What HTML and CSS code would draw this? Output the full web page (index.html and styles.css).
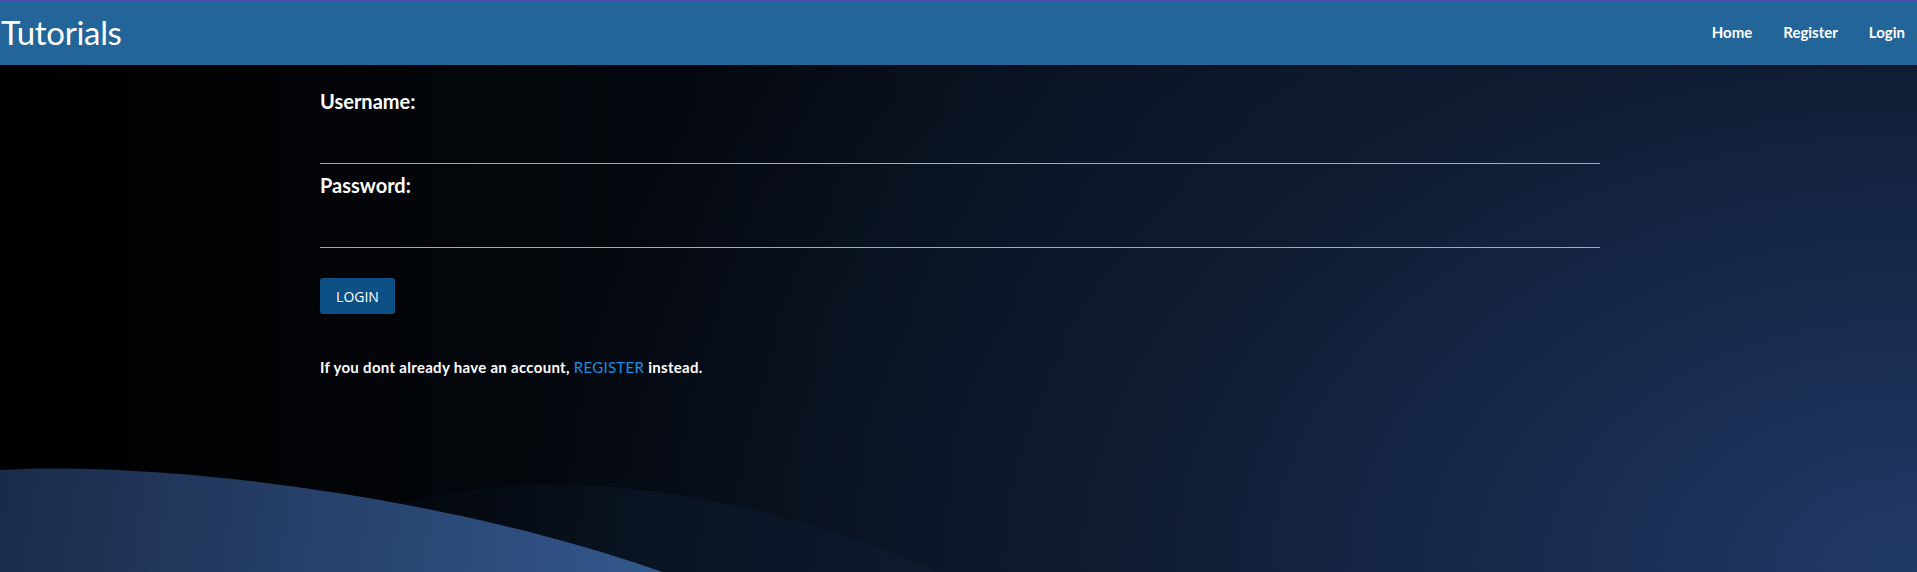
FILE: index.html
```html
<!DOCTYPE html>
<html lang="en">
<head>
<meta charset="utf-8">
<title>Tutorials - Login</title>
<link rel="stylesheet" href="styles.css">
</head>
<body>
<header class="topbar">
  <a class="brand" href="#">Tutorials</a>
  <nav class="nav">
    <a href="#">Home</a>
    <a href="#">Register</a>
    <a href="#">Login</a>
  </nav>
</header>
<main class="main">
  <svg class="waves" viewBox="0 0 1917 507" preserveAspectRatio="none" aria-hidden="true">
    <defs>
      <linearGradient id="w1" x1="0" y1="400" x2="700" y2="507" gradientUnits="userSpaceOnUse">
        <stop offset="0" stop-color="#1a2b49"/>
        <stop offset="1" stop-color="#355a91"/>
      </linearGradient>
      <linearGradient id="w2" x1="450" y1="420" x2="990" y2="507" gradientUnits="userSpaceOnUse">
        <stop offset="0" stop-color="#04080f"/>
        <stop offset="0.35" stop-color="#091321"/>
        <stop offset="1" stop-color="#0e1c32"/>
      </linearGradient>
    </defs>
    <path d="M380,445 C500,405 710,398 990,530 L380,530 Z" fill="url(#w2)"/>
    <path d="M0,405 C150,395 510,430 775,552 L0,552 Z" fill="url(#w1)"/>
  </svg>
  <form class="form">
    <label class="label" for="u">Username:</label>
    <input class="field" id="u" type="text">
    <label class="label" for="p">Password:</label>
    <input class="field" id="p" type="password">
    <button class="btn" type="button">LOGIN</button>
    <p class="note">If you dont already have an account, <a href="#">REGISTER</a> instead.</p>
  </form>
</main>
</body>
</html>
```
FILE: styles.css
```css
html, body {
  margin: 0;
  padding: 0;
  height: 100%;
}
body {
  font-family: "Lato", "Noto Sans", sans-serif;
  color: #fff;
  background: #000;
  display: flex;
  flex-direction: column;
  overflow: hidden;
}
.topbar {
  height: 64px;
  background: #236598;
  border-top: 1px solid #4d4fb4;
  display: flex;
  align-items: center;
  justify-content: space-between;
  box-shadow: 0 1px 3px rgba(0,0,0,0.5);
  position: relative;
  z-index: 2;
}
.brand {
  color: #fff;
  text-decoration: none;
  font-size: 33px;
  font-weight: 400;
  padding-left: 1px;
  letter-spacing: -0.3px;
  margin-top: -2px;
}
.nav {
  display: flex;
  gap: 31px;
  padding-right: 12px;
  margin-top: -2px;
}
.nav a {
  color: #fff;
  text-decoration: none;
  font-size: 15px;
  font-weight: 700;
}
.main {
  flex: 1;
  position: relative;
  background:
    radial-gradient(ellipse 1400px 950px at 100% 100%, #223a67 0%, #172a4c 30%, #0e1a2f 60%, rgba(6,11,20,0) 100%),
    linear-gradient(90deg, #000 0%, #04080e 35%, #0a1322 70%, #0e1a2c 100%);
}
.waves {
  position: absolute;
  left: 0;
  top: 0;
  width: 100%;
  height: 100%;
  z-index: 0;
}
.form {
  position: relative;
  z-index: 1;
  width: 1280px;
  margin-left: 320px;
  padding-top: 24px;
  display: flex;
  flex-direction: column;
  align-items: flex-start;
}
.label {
  font-size: 20px;
  font-weight: 700;
  line-height: 24px;
  height: 24px;
}
.field {
  box-sizing: border-box;
  width: 100%;
  height: 51px;
  background: transparent;
  border: 0;
  border-bottom: 1px solid #a9a9a9;
  color: #fff;
  outline: none;
  margin: 0 0 9px 0;
  padding: 0;
}
.btn {
  margin-top: 21px;
  width: 75px;
  height: 36px;
  background: #0c5086;
  border: 0;
  border-radius: 3px;
  color: #fff;
  font-family: "Open Sans", "Liberation Sans", sans-serif;
  font-size: 14px;
  padding: 0;
}
.note {
  margin: 43px 0 0 0;
  font-size: 15px;
  line-height: 20px;
  font-weight: 700;
  letter-spacing: 0.3px;
}
.note a {
  color: #1b8fe2;
  text-decoration: none;
  font-weight: 400;
}
```
